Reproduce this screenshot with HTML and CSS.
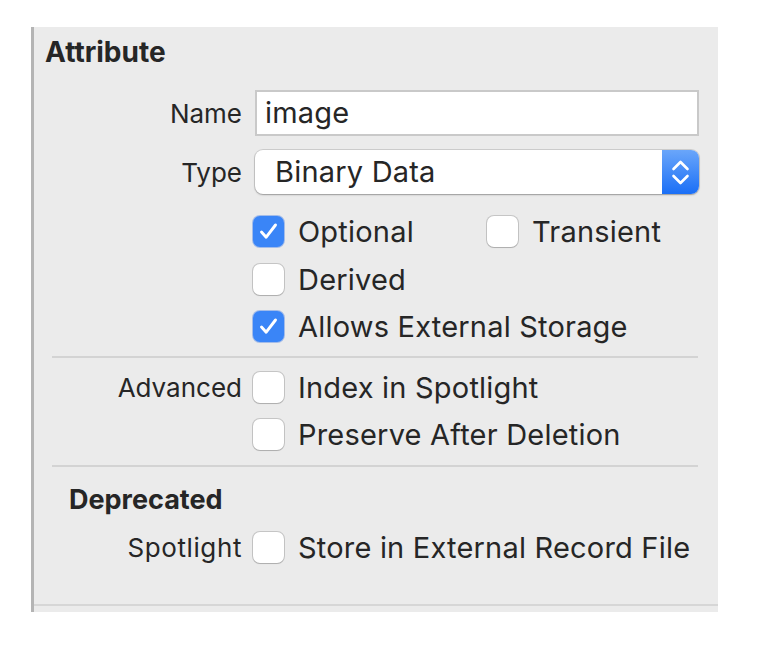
FILE: index.html
```html
<!DOCTYPE html>
<html>
<head>
<meta charset="utf-8">
<link rel="stylesheet" href="styles.css">
</head>
<body>
<div class="panel">
  <div class="title">Attribute</div>

  <div class="row row-field">
    <div class="label">Name</div>
    <div class="ctrl"><div class="textfield">image</div></div>
  </div>

  <div class="row row-popup">
    <div class="label">Type</div>
    <div class="ctrl">
      <div class="popup">
        <span class="popup-text">Binary Data</span>
        <span class="stepper">
          <svg width="37" height="44" viewBox="0 0 37 44"><path d="M11.5 19 L18.5 12 L25.5 19 M11.5 26 L18.5 33 L25.5 26" fill="none" stroke="#fff" stroke-width="2.6" stroke-linecap="round" stroke-linejoin="round"/></svg>
        </span>
      </div>
    </div>
  </div>

  <div class="row row-check first-check">
    <div class="label"></div>
    <div class="ctrl">
      <div class="check col-a"><span class="box on"><svg width="31" height="31" viewBox="0 0 31 31"><path d="M8.5 16 L13.2 21.2 L22.5 9" fill="none" stroke="#fff" stroke-width="2.9" stroke-linecap="round" stroke-linejoin="round"/></svg></span><span>Optional</span></div>
      <div class="check"><span class="box"></span><span>Transient</span></div>
    </div>
  </div>

  <div class="row row-check">
    <div class="label"></div>
    <div class="ctrl">
      <div class="check"><span class="box"></span><span>Derived</span></div>
    </div>
  </div>

  <div class="row row-check">
    <div class="label"></div>
    <div class="ctrl">
      <div class="check"><span class="box on"><svg width="31" height="31" viewBox="0 0 31 31"><path d="M8.5 16 L13.2 21.2 L22.5 9" fill="none" stroke="#fff" stroke-width="2.9" stroke-linecap="round" stroke-linejoin="round"/></svg></span><span>Allows External Storage</span></div>
    </div>
  </div>

  <div class="sep sep-1"></div>

  <div class="row row-check">
    <div class="label">Advanced</div>
    <div class="ctrl">
      <div class="check"><span class="box"></span><span>Index in Spotlight</span></div>
    </div>
  </div>

  <div class="row row-check">
    <div class="label"></div>
    <div class="ctrl">
      <div class="check"><span class="box"></span><span>Preserve After Deletion</span></div>
    </div>
  </div>

  <div class="sep sep-2"></div>

  <div class="subtitle">Deprecated</div>

  <div class="row row-check row-last">
    <div class="label label-wide">Spotlight</div>
    <div class="ctrl">
      <div class="check"><span class="box"></span><span>Store in External Record File</span></div>
    </div>
  </div>

  <div class="spacer"></div>
  <div class="bottom-sep"></div>
</div>
</body>
</html>
```

FILE: styles.css
```css
html, body {
  margin: 0;
  padding: 0;
  background: #ffffff;
}

body {
  font-family: Inter, "Liberation Sans", sans-serif;
  color: #262626;
  font-size: 26px;
}

.panel {
  margin-left: 31px;
  margin-top: 27px;
  width: 687px;
  height: 585px;
  box-sizing: border-box;
  background: #ebebeb;
  border-left: 3px solid #b4b4b4;
  display: flex;
  flex-direction: column;
}

.title {
  font-weight: 700;
  font-size: 28px;
  line-height: 50px;
  height: 50px;
  padding-left: 11px;
}

.row {
  display: flex;
  align-items: center;
}

.label {
  width: 220px;
  flex: none;
  text-align: right;
  padding-right: 12px;
  box-sizing: border-box;
}

.label-wide {
  letter-spacing: 0.6px;
}

.ctrl {
  display: flex;
  align-items: center;
  flex: 1;
  padding-right: 19px;
  padding-left: 1px;
  font-size: 29px;
  letter-spacing: 0.2px;
}

.row-field {
  margin-top: 13px;
  height: 46px;
}

.textfield {
  flex: 1;
  height: 46px;
  box-sizing: border-box;
  background: #fff;
  border: 2px solid #c9c9c9;
  line-height: 42px;
  padding-left: 8px;
}

.row-popup {
  margin-top: 14px;
  height: 44px;
}

.popup {
  flex: 1;
  height: 44px;
  display: flex;
  align-items: stretch;
  background: #fff;
  border-radius: 8px;
  box-shadow: 0 0 0 1px rgba(0,0,0,0.12), 0 1px 2px rgba(0,0,0,0.25);
  overflow: hidden;
}

.popup-text {
  flex: 1;
  line-height: 44px;
  padding-left: 20px;
}

.stepper {
  width: 37px;
  flex: none;
  background: linear-gradient(#6aa6fa, #1b6ff6);
  display: flex;
}

.row-check {
  height: 47.5px;
}

.first-check {
  margin-top: 14px;
}

.check {
  display: flex;
  align-items: center;
  gap: 14px;
  margin-left: -2px;
}

.col-a {
  width: 236px;
}

.box {
  width: 31px;
  height: 31px;
  flex: none;
  box-sizing: border-box;
  border-radius: 7px;
  background: #fff;
  box-shadow: 0 0 0 1px rgba(0,0,0,0.16), 0 1px 1px rgba(0,0,0,0.12);
  display: flex;
}

.box.on {
  background: #3a85f7;
  box-shadow: 0 0 0 1px rgba(30,100,230,0.35);
}

.sep {
  height: 2px;
  background: #d3d3d3;
  margin-left: 18px;
  margin-right: 20px;
}

.sep-1 {
  margin-top: 5px;
  margin-bottom: 6px;
}

.sep-2 {
  margin-top: 6px;
}

.subtitle {
  font-weight: 700;
  font-size: 27px;
  margin-top: 10px;
  height: 46px;
  line-height: 46px;
  padding-left: 35px;
}

.row-last {
  margin-top: 1px;
}

.spacer {
  flex: 1;
}

.bottom-sep {
  height: 2px;
  background: #d6d6d6;
  margin-bottom: 6px;
}
```
